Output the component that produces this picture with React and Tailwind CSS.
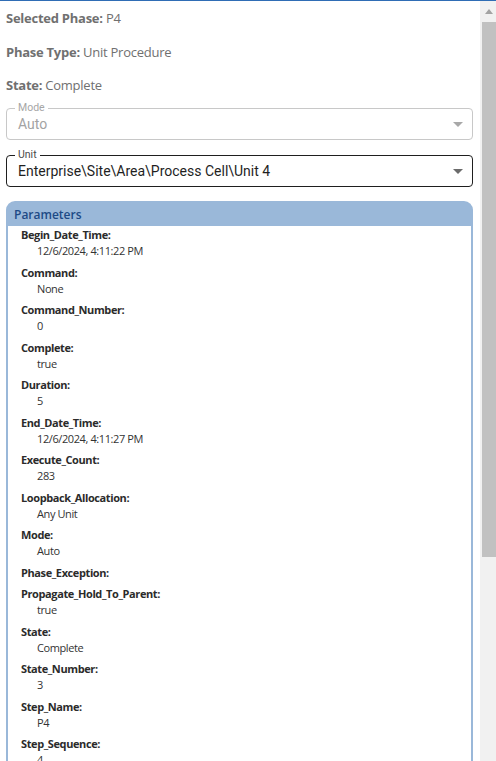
import React from 'react';

const params = [
  ['Begin_Date_Time', '12/6/2024, 4:11:22 PM'],
  ['Command', 'None'],
  ['Command_Number', '0'],
  ['Complete', 'true'],
  ['Duration', '5'],
  ['End_Date_Time', '12/6/2024, 4:11:27 PM'],
  ['Execute_Count', '283'],
  ['Loopback_Allocation', 'Any Unit'],
  ['Mode', 'Auto'],
  ['Phase_Exception', ''],
  ['Propagate_Hold_To_Parent', 'true'],
  ['State', 'Complete'],
  ['State_Number', '3'],
  ['Step_Name', 'P4'],
  ['Step_Sequence', '4'],
  ['Unit', 'Unit 4'],
];

function Caret({ color }) {
  return (
    <svg width="10" height="5" viewBox="0 0 10 5" className="shrink-0">
      <path d="M0 0 L10 0 L5 5 Z" fill={color} />
    </svg>
  );
}

function OutlinedSelect({ label, value, disabled }) {
  return (
    <div
      className={`relative h-[32px] rounded-[4px] border pl-[11px] pr-[9px] flex items-center ${
        disabled ? 'border-[#c8c8c8]' : 'border-[#1f1f1f]'
      }`}
    >
      <span
        className={`absolute -top-[8px] left-[8px] bg-white px-[3px] text-[10.5px] leading-[14px] font-['Roboto',sans-serif] ${
          disabled ? 'text-[#a6a6a6]' : 'text-[#4a4a4a]'
        }`}
      >
        {label}
      </span>
      <span
        className={`flex-1 text-[14px] leading-[20px] font-['Roboto',sans-serif] ${
          disabled ? 'text-[#a3a3a3]' : 'text-[#1f1f1f]'
        }`}
      >
        {value}
      </span>
      <Caret color={disabled ? '#a8a8a8' : '#6b6b6b'} />
    </div>
  );
}

function Scrollbar() {
  return (
    <div className="w-[16px] shrink-0 bg-[#f1f1f1] flex flex-col items-end">
      <div className="h-[21px] w-[14px] flex items-center justify-center">
        <svg width="8" height="5" viewBox="0 0 8 5">
          <path d="M0 5 L4 0 L8 5 Z" fill="#a3a3a3" />
        </svg>
      </div>
      <div className="h-[535px] w-[14px] bg-[#c1c1c1]" />
    </div>
  );
}

export default function App() {
  return (
    <div className="w-[496px] h-[761px] bg-white border-t border-[#2f6db5] flex overflow-hidden">
      <div className="flex-1 min-w-0 pl-[6px] pr-[7px] overflow-hidden">
        <div className="flex flex-col gap-[13.5px] pt-[7px] font-['Open_Sans',sans-serif] text-[13px] leading-[20px] tracking-[-0.25px] text-[#707070]">
          <div>
            <span className="font-bold">Selected Phase:</span> P4
          </div>
          <div>
            <span className="font-bold">Phase Type:</span> Unit Procedure
          </div>
          <div>
            <span className="font-bold">State:</span> Complete
          </div>
        </div>

        <div className="mt-[13px] flex flex-col gap-[15px]">
          <OutlinedSelect label="Mode" value="Auto" disabled />
          <OutlinedSelect label="Unit" value="Enterprise\Site\Area\Process Cell\Unit 4" />
        </div>

        <div className="mt-[14px] rounded-t-[9px] bg-[#9ab8d9] px-[2px] font-['Open_Sans',sans-serif]">
          <div className="h-[25px] flex items-center pt-[2px] pl-[6px] text-[12px] font-semibold text-[#1d4a86]">
            Parameters
          </div>
          <div className="bg-white pl-[13px] pt-[1px] min-h-[600px] tracking-[-0.4px]">
            {params.map(([name, value]) => (
              <div key={name} className="mb-[5.5px]">
                <div className="text-[11px] leading-[16px] font-bold text-[#2b2b2b]">{name}:</div>
                {value && (
                  <div className="pl-[16px] text-[11px] leading-[16px] text-[#333]">{value}</div>
                )}
              </div>
            ))}
          </div>
        </div>
      </div>
      <Scrollbar />
    </div>
  );
}
